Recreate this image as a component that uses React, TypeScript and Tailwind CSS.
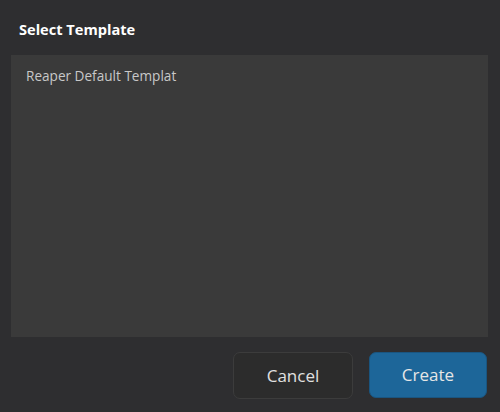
export default function App() {
  return (
    <div className="w-[500px] h-[412px] bg-[#2e2e30] flex flex-col" style={{ fontFamily: '"Open Sans", "Noto Sans", sans-serif' }}>
      <div className="h-[55px] pl-[19px] flex items-center pt-[4px]">
        <span className="text-[14.6px] font-bold text-white leading-none">Select Template</span>
      </div>
      <div className="mx-[11px] mr-[12px] h-[282px] bg-[#3a3a3a] pl-[15px] pt-[11px]">
        <div className="text-[13.6px] text-[#c8c8c8] leading-[20px]">Reaper Default Templat</div>
      </div>
      <div className="flex justify-end gap-[16px] pr-[13px] pt-[15px]">
        <button className="w-[120px] h-[47px] rounded-[7px] bg-[#2c2c2c] border border-[#3c3c3c] text-[#e0e0e0] text-[17px]">Cancel</button>
        <button className="w-[118px] h-[46px] rounded-[7px] bg-[#1d6699] border border-[#1a5580] text-[#e6e6e6] text-[17px]">Create</button>
      </div>
    </div>
  );
}
